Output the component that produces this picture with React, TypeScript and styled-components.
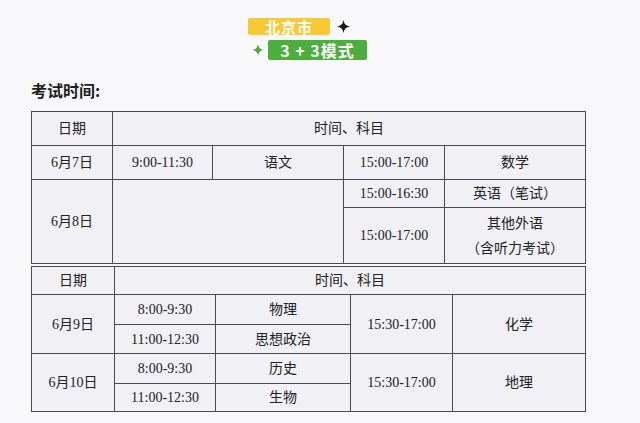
import styled, { createGlobalStyle } from "styled-components";

const GlobalStyle = createGlobalStyle`
  body {
    margin: 0;
    background-color: #f8f8fb;
    font-family: "Liberation Serif", "Noto Sans CJK SC", serif;
    color: #222222;
  }
`;

type Cell = {
  text: string;
  col?: string;
  row?: string;
};

const firstDays: Cell[] = [
  { text: "日期" },
  { text: "时间、科目", col: "span 4" },
  { text: "6月7日" },
  { text: "9:00-11:30" },
  { text: "语文" },
  { text: "15:00-17:00" },
  { text: "数学" },
  { text: "6月8日", row: "span 2" },
  { text: "", col: "span 2", row: "span 2" },
  { text: "15:00-16:30" },
  { text: "英语（笔试）" },
  { text: "15:00-17:00" },
  { text: "其他外语\n（含听力考试）" },
];

const lastDays: Cell[] = [
  { text: "日期" },
  { text: "时间、科目", col: "span 4" },
  { text: "6月9日", row: "span 2" },
  { text: "8:00-9:30" },
  { text: "物理" },
  { text: "15:30-17:00", row: "span 2" },
  { text: "化学", row: "span 2" },
  { text: "11:00-12:30" },
  { text: "思想政治" },
  { text: "6月10日", row: "span 2" },
  { text: "8:00-9:30" },
  { text: "历史" },
  { text: "15:30-17:00", row: "span 2" },
  { text: "地理", row: "span 2" },
  { text: "11:00-12:30" },
  { text: "生物" },
];

const Spark = ({ color, size }: { color: string; size: number }) => (
  <svg width={size} height={size} viewBox="0 0 10 10">
    <path
      d="M5 0 Q5.5 4.5 10 5 Q5.5 5.5 5 10 Q4.5 5.5 0 5 Q4.5 4.5 5 0Z"
      fill={color}
    />
  </svg>
);

const Schedule = ({
  cells,
  cols,
  rows,
}: {
  cells: Cell[];
  cols: string;
  rows: string;
}) => (
  <Grid $cols={cols} $rows={rows}>
    {cells.map((cell, i) => (
      <GridCell key={i} $col={cell.col} $row={cell.row}>
        {cell.text.split("\n").map((line, j) => (
          <Line key={j}>{line}</Line>
        ))}
      </GridCell>
    ))}
  </Grid>
);

const App = () => {
  return (
    <>
      <GlobalStyle />
      <Page>
        <Badges>
          <BadgeRow>
            <Tag $bg="#f8c935" $w={82} $h={17} $size={15}>
              北京市
            </Tag>
            <Spark color="#1a1a1a" size={13} />
          </BadgeRow>
          <BadgeRow $indent>
            <Spark color="#4cae3c" size={12} />
            <Tag $bg="#4cae3c" $w={99} $h={20} $size={16}>
              3 + 3模式
            </Tag>
          </BadgeRow>
        </Badges>
        <Title>考试时间:</Title>
        <Schedule
          cells={firstDays}
          cols="80px 99px 130px 100px 140px"
          rows="33px 33px 27px 55px"
        />
        <Spacer />
        <Schedule
          cells={lastDays}
          cols="82px 100px 134px 101px 132px"
          rows="27px 29px 28px 29px 27px"
        />
      </Page>
    </>
  );
};

export default App;

const Page = styled.div`
  display: flex;
  flex-direction: column;
  align-items: flex-start;
  padding: 18px 0 0 31px;
`;

const Badges = styled.div`
  display: flex;
  flex-direction: column;
  gap: 5px;
  margin-left: 217px;
`;

const BadgeRow = styled.div<{ $indent?: boolean }>`
  display: flex;
  align-items: center;
  gap: ${({ $indent }) => ($indent ? "4px" : "7px")};
  margin-left: ${({ $indent }) => ($indent ? "4px" : "0")};
`;

const Tag = styled.div<{ $bg: string; $w: number; $h: number; $size: number }>`
  display: flex;
  align-items: center;
  justify-content: center;
  width: ${({ $w }) => $w}px;
  height: ${({ $h }) => $h}px;
  background-color: ${({ $bg }) => $bg};
  border-radius: 2px;
  color: #ffffff;
  font-family: "Noto Sans CJK SC", "Liberation Sans", sans-serif;
  font-weight: 700;
  font-size: ${({ $size }) => $size}px;
  letter-spacing: 1px;
  line-height: 1;
`;

const Title = styled.div`
  margin-top: 20px;
  height: 20px;
  font-family: "Noto Sans CJK SC", "Liberation Sans", sans-serif;
  font-weight: 700;
  font-size: 16px;
  line-height: 20px;
  color: #1e1e1e;
`;

const Grid = styled.div<{ $cols: string; $rows: string }>`
  margin-top: 11px;
  display: grid;
  grid-template-columns: ${({ $cols }) => $cols};
  grid-template-rows: ${({ $rows }) => $rows};
  gap: 1px;
  padding: 1px;
  background-color: #4a4a50;
`;

const Spacer = styled.div`
  height: 1px;
  margin-top: -10px;
`;

const GridCell = styled.div<{ $col?: string; $row?: string }>`
  grid-column: ${({ $col }) => $col ?? "auto"};
  grid-row: ${({ $row }) => $row ?? "auto"};
  display: flex;
  flex-direction: column;
  align-items: center;
  justify-content: center;
  background-color: #f0f0f5;
  font-size: 14px;
`;

const Line = styled.span`
  line-height: 25px;
  white-space: nowrap;
`;
